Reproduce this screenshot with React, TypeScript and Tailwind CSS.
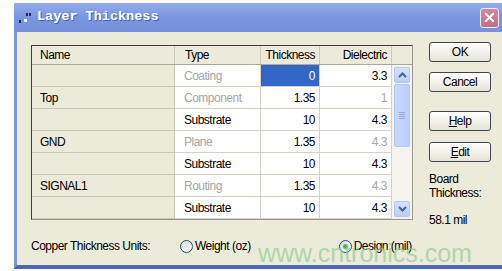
import { X } from 'lucide-react'

const rows = [
  { name: '', type: 'Coating', typeDim: true, thick: '0', diel: '3.3', dielDim: false, sel: true },
  { name: 'Top', type: 'Component', typeDim: true, thick: '1.35', diel: '1', dielDim: true, sel: false },
  { name: '', type: 'Substrate', typeDim: false, thick: '10', diel: '4.3', dielDim: false, sel: false },
  { name: 'GND', type: 'Plane', typeDim: true, thick: '1.35', diel: '4.3', dielDim: true, sel: false },
  { name: '', type: 'Substrate', typeDim: false, thick: '10', diel: '4.3', dielDim: false, sel: false },
  { name: 'SIGNAL1', type: 'Routing', typeDim: true, thick: '1.35', diel: '4.3', dielDim: true, sel: false },
  { name: '', type: 'Substrate', typeDim: false, thick: '10', diel: '4.3', dielDim: false, sel: false },
]

function XpButton({ children, className = '' }: { children: React.ReactNode; className?: string }) {
  return (
    <div
      className={`w-[62px] h-[21px] flex items-center justify-center rounded-[3px] border border-[#3c4650] bg-gradient-to-b from-white to-[#e6e4d8] text-black ${className}`}
    >
      {children}
    </div>
  )
}

function Radio({ checked, label }: { checked?: boolean; label: string }) {
  return (
    <div className="flex items-center gap-[2px]">
      <div className="w-[13px] h-[13px] rounded-full border border-[#1c5180] bg-gradient-to-br from-[#dcdbd3] to-white flex items-center justify-center">
        {checked && <div className="w-[5px] h-[5px] rounded-full bg-[#4db34d]" />}
      </div>
      <span>{label}</span>
    </div>
  )
}

function ScrollArrow({ up }: { up?: boolean }) {
  return (
    <div className="w-[16px] h-[16px] rounded-[2px] border border-[#b4c6ee] bg-gradient-to-b from-[#d6e2fd] to-[#b9cdf8] flex items-center justify-center">
      <svg width="9" height="6" viewBox="0 0 9 6">
        <path
          d={up ? 'M1 5 L4.5 1.5 L8 5' : 'M1 1 L4.5 4.5 L8 1'}
          fill="none"
          stroke="#4d6185"
          strokeWidth="2"
        />
      </svg>
    </div>
  )
}

export default function App() {
  return (
    <div
      className="relative w-[502px] h-[271px] bg-white overflow-hidden pt-[3px] pl-[14px] text-[12px] tracking-[-0.5px] text-black"
      style={{ fontFamily: '"Liberation Sans", Arial, sans-serif' }}
    >
      <div className="w-[488px] h-[266px] flex flex-col">
        {/* Title bar */}
        <div className="h-[29px] flex items-center pl-[3px] pr-[3px] bg-gradient-to-b from-[#93acec] via-[#7a96e0] to-[#7690dc]">
          <svg width="16" height="16" viewBox="0 0 16 16" className="mr-[4px]">
            <rect x="9" y="3" width="2" height="3" fill="#1e2a6e" />
            <rect x="12" y="3" width="2" height="3" fill="#1e2a6e" />
            <rect x="2" y="10" width="2" height="3" fill="#1e2a6e" />
            <rect x="7" y="9" width="3" height="3" fill="#f4f4f4" />
          </svg>
          <span
            className="text-white font-bold text-[13.5px] tracking-normal [text-shadow:1px_1px_0_#4a5fa8]"
            style={{ fontFamily: '"Liberation Mono", "Courier New", monospace' }}
          >
            Layer Thickness
          </span>
          <div className="ml-auto w-[19px] h-[20px] rounded-[3px] border border-[#eee] bg-gradient-to-b from-[#d48aa0] to-[#c06f88] flex items-center justify-center">
            <X size={15} strokeWidth={3} color="white" />
          </div>
        </div>

        {/* Body */}
        <div className="flex-1 bg-[#ecead9] border-l-[3px] border-[#7b95dc] border-b-[4px] border-b-[#4f67b3] pl-[14px] pt-[10px]">
          <div className="flex h-[179px]">
            <div className="mt-[3px] w-[382px] self-start border border-[#9a988c] border-t-[#3c3c3c] border-l-[#3c3c3c]">
              {/* Header */}
              <div className="flex h-[19px] bg-[#ecead9] border-b border-[#aca899]">
                <div className="w-[143px] pl-[8px] flex items-center border-r border-[#cdcabb]">Name</div>
                <div className="w-[86px] pl-[10px] flex items-center border-r border-[#cdcabb]">Type</div>
                <div className="w-[59px] pr-[4px] flex items-center justify-end border-r border-[#cdcabb]">Thickness</div>
                <div className="w-[72px] pr-[4px] flex items-center justify-end border-r border-[#cdcabb]">Dielectric</div>
                <div className="w-[20px]" />
              </div>
              {/* Rows + scrollbar */}
              <div className="flex">
                <div className="flex flex-col">
                  {rows.map((r, i) => (
                    <div key={i} className="flex h-[22px]">
                      <div className="w-[143px] pl-[8px] flex items-center bg-[#ecead9] border-r border-b border-[#c9c6b6]">
                        {r.name}
                      </div>
                      <div
                        className={`w-[86px] pl-[9px] flex items-center bg-white border-r border-b border-[#d4d2c8] ${
                          r.typeDim ? 'text-[#a6a6a6]' : 'text-black'
                        }`}
                      >
                        {r.type}
                      </div>
                      <div
                        className={`w-[59px] pr-[4px] flex items-center justify-end border-r border-b border-[#d4d2c8] ${
                          r.sel ? 'bg-[#3167c6] text-white' : 'bg-white'
                        }`}
                      >
                        {r.thick}
                      </div>
                      <div
                        className={`w-[72px] pr-[4px] flex items-center justify-end bg-white border-r border-b border-[#d4d2c8] ${
                          r.dielDim ? 'text-[#a6a6a6]' : 'text-black'
                        }`}
                      >
                        {r.diel}
                      </div>
                    </div>
                  ))}
                </div>
                <div className="w-[20px] h-[154px] bg-[#f4f3ee] pl-[2px] py-[2px] flex flex-col">
                  <ScrollArrow up />
                  <div className="mt-[1px] w-[16px] h-[63px] rounded-[2px] border border-[#b4c6ee] bg-gradient-to-r from-[#c9d8fc] to-[#bccffa] flex items-center justify-center">
                    <div className="flex flex-col gap-[1px]">
                      <div className="w-[6px] h-px bg-[#8ea8e4]" />
                      <div className="w-[6px] h-px bg-[#8ea8e4]" />
                      <div className="w-[6px] h-px bg-[#8ea8e4]" />
                      <div className="w-[6px] h-px bg-[#8ea8e4]" />
                    </div>
                  </div>
                  <div className="flex-1" />
                  <ScrollArrow />
                </div>
              </div>
            </div>

            {/* Right column */}
            <div className="ml-[16px] flex flex-col">
              <XpButton>OK</XpButton>
              <XpButton className="mt-[10px]">Cancel</XpButton>
              <XpButton className="mt-[19px]">
                <span className="underline">H</span>elp
              </XpButton>
              <XpButton className="mt-[11px]">
                <span className="underline">E</span>dit
              </XpButton>
              <div className="mt-[10px] leading-[14px]">
                Board
                <br />
                Thickness:
              </div>
              <div className="mt-[11px]">58.1 mil</div>
            </div>
          </div>

          {/* Bottom row */}
          <div className="mt-[17px] flex items-center h-[16px]">
            <span className="w-[149px]">Copper Thickness Units:</span>
            <Radio label="Weight (oz)" />
            <div className="ml-[88px]">
              <Radio checked label="Design (mil)" />
            </div>
          </div>
        </div>
      </div>

      {/* watermark */}
      <div
        className="absolute left-[258px] top-[241px] text-[25px] tracking-normal text-[#8fce8f]/70 leading-none"
        style={{ fontFamily: '"Liberation Sans", Arial, sans-serif' }}
      >
        www.cntronics.com
      </div>
    </div>
  )
}
